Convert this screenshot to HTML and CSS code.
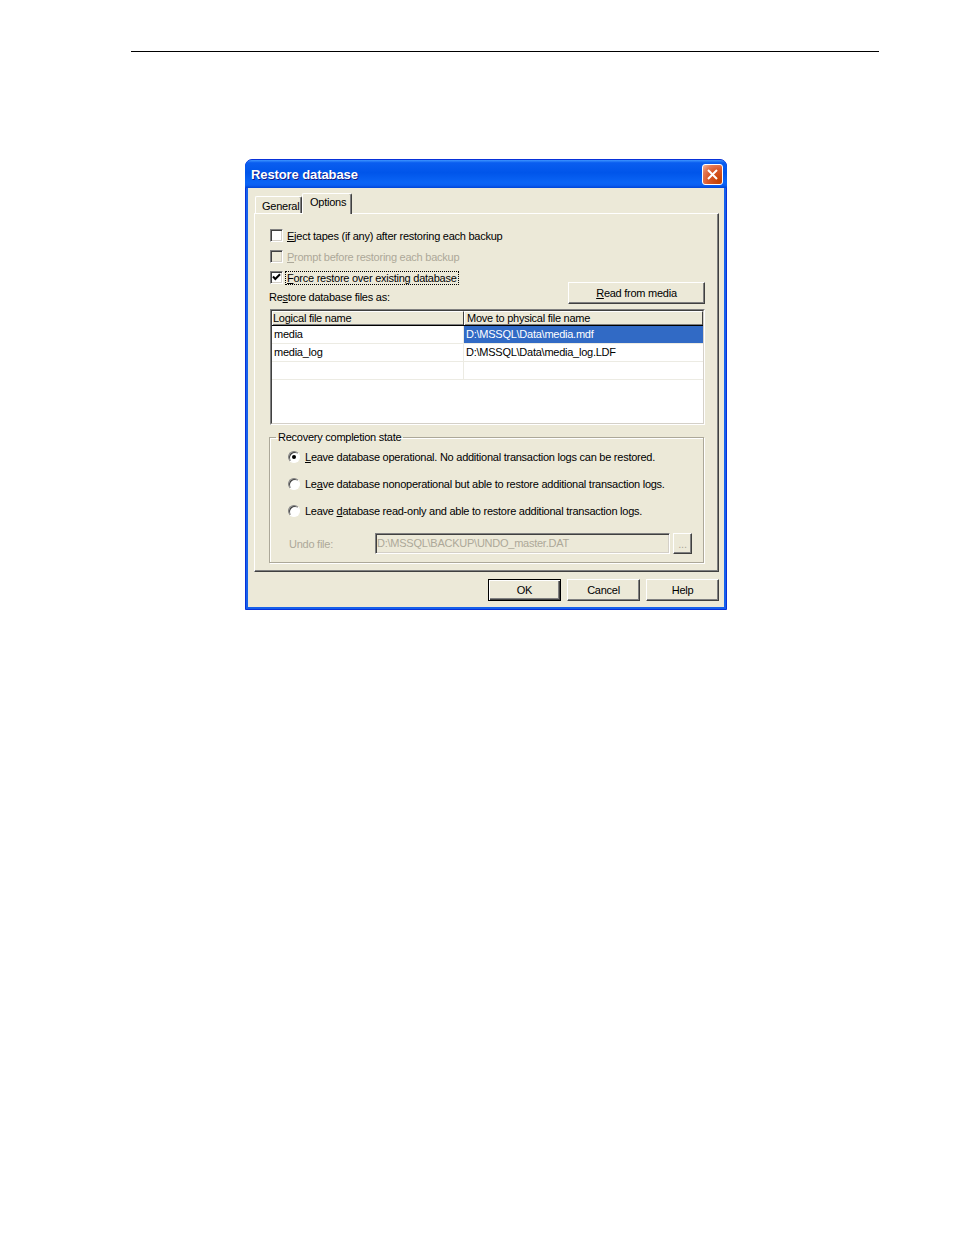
FILE: index.html
```html
<!doctype html>
<html>
<head>
  <link rel="stylesheet" href="styles.css">
</head>
<body>
  <div class="rule"></div>

  <div class="dialog">
    <div class="titlebar">
      <span class="title">Restore database</span>
      <span class="close">
        <svg width="19" height="19" viewBox="0 0 19 19"><path d="M5 5 L14 14 M14 5 L5 14" stroke="#fff" stroke-width="2" fill="none"/></svg>
      </span>
    </div>

    <div class="body">
      <div class="tabs">
        <div class="tab">General</div>
        <div class="tab selected">Options</div>
      </div>

      <div class="panel">
        <div class="checks">
          <div class="check"><span class="box"></span><span><u>E</u>ject tapes (if any) after restoring each backup</span></div>
          <div class="check disabled"><span class="box"></span><span><u>P</u>rompt before restoring each backup</span></div>
          <div class="check"><span class="box"><svg width="11" height="11" viewBox="0 0 11 11"><path d="M2 4.5 L4.3 7 L9 2.2" stroke="#000" stroke-width="2" fill="none"/></svg></span><span class="focus"><u>F</u>orce restore over existing database</span></div>
        </div>

        <div class="files-row">
          <span class="files-label">Re<u>s</u>tore database files as:</span>
          <button class="btn read-btn"><u>R</u>ead from media</button>
        </div>

        <div class="list">
          <div class="list-inner">
            <div class="row head">
              <div class="cell c1">Logical file name</div>
              <div class="cell c2">Move to physical file name</div>
            </div>
            <div class="row">
              <div class="cell c1">media</div>
              <div class="cell c2 sel">D:\MSSQL\Data\media.mdf</div>
            </div>
            <div class="row">
              <div class="cell c1">media_log</div>
              <div class="cell c2">D:\MSSQL\Data\media_log.LDF</div>
            </div>
            <div class="row">
              <div class="cell c1"></div>
              <div class="cell c2"></div>
            </div>
          </div>
        </div>

        <fieldset class="group">
          <legend>Recovery completion state</legend>
          <div class="radios">
            <div class="radio"><span class="dot on"></span><span><u>L</u>eave database operational. No additional transaction logs can be restored.</span></div>
            <div class="radio"><span class="dot"></span><span>Le<u>a</u>ve database nonoperational but able to restore additional transaction logs.</span></div>
            <div class="radio"><span class="dot"></span><span>Leave <u>d</u>atabase read-only and able to restore additional transaction logs.</span></div>
          </div>
          <div class="undo-row">
            <span class="undo-label">Undo file:</span>
            <span class="undo-input">D:\MSSQL\BACKUP\UNDO_master.DAT</span>
            <button class="btn browse">...</button>
          </div>
        </fieldset>
      </div>

      <div class="buttons">
        <button class="btn default">OK</button>
        <button class="btn">Cancel</button>
        <button class="btn">Help</button>
      </div>
    </div>
  </div>
</body>
</html>
```

FILE: styles.css
```css
body{
  margin: 0;
  background: #fff;
  font-family: "Liberation Sans", Arial, sans-serif;
  font-size: 11px;
  letter-spacing: -0.25px;
  color: #000;
}
.rule{
  height: 1px;
  background: #000;
  margin: 51px 75px 0 131px;
}

.dialog{
  margin: 107px 0 0 245px;
  width: 482px;
  height: 451px;
  box-sizing: border-box;
  display: flex;
  flex-direction: column;
  background: #1660ea;
  border: 1px solid #0831d9;
  border-radius: 7px 7px 0 0;
}
.titlebar{
  height: 28px;
  margin: 0 -1px;
  display: flex;
  align-items: center;
  justify-content: space-between;
  border-radius: 7px 7px 0 0;
  background: linear-gradient(to bottom, #3d95ff 0%, #0a5ef0 10%, #0055ea 45%, #0a64f5 80%, #0a5ff2 90%, #0044d6 100%);
}
.title{
  padding-left: 6px;
  color: #fff;
  font-size: 13px;
  font-weight: bold;
  letter-spacing: -0.1px;
  text-shadow: 1px 1px #0f1a89;
}
.close{
  width: 19px;
  height: 19px;
  margin-right: 4px;
  border: 1px solid #fff;
  border-radius: 3px;
  background: radial-gradient(circle at 85% 85%, #c44100 0%, #d9582a 50%, #e47a55 75%, #f5b9a0 100%);
  display: flex;
}

.body{
  flex: 1;
  margin: 0 2px 2px;
  background: #ece9d8;
  padding: 5px 5px 0 6px;
  display: flex;
  flex-direction: column;
}

.tabs{
  height: 20px;
  display: flex;
  align-items: flex-end;
  padding-left: 1px;
  position: relative;
  z-index: 1;
}
.tab{
  height: 17px;
  width: 47px;
  box-sizing: border-box;
  padding: 3px 0 0 6px;
  white-space: nowrap;
  border: 1px solid #fff;
  border-right-color: #404040;
  border-bottom: none;
  border-radius: 2px 2px 0 0;
  box-shadow: inset -1px 0 #808080;
  background: #ece9d8;
}
.tab.selected{
  height: 21px;
  width: 50px;
  margin-bottom: -1px;
  padding: 2px 0 0 7px;
}

.panel{
  height: 359px;
  box-sizing: border-box;
  border: 1px solid #fff;
  border-right-color: #404040;
  border-bottom-color: #404040;
  box-shadow: inset -1px -1px #808080;
  padding: 15px 13px 0 15px;
  display: flex;
  flex-direction: column;
}

.checks{
  display: flex;
  flex-direction: column;
  gap: 8px;
}
.check{
  height: 13px;
  display: flex;
  align-items: center;
  gap: 4px;
}
.box{
  width: 13px;
  height: 13px;
  box-sizing: border-box;
  border: 1px solid;
  border-color: #808080 #fff #fff #808080;
  box-shadow: inset 1px 1px #404040, inset -1px -1px #d4d0c8;
  background: #fff;
  display: flex;
  align-items: center;
  justify-content: center;
}
.check.disabled{
  color: #aca899;
}
.check.disabled .box{
  background: #ece9d8;
}
.focus{
  outline: 1px dotted #000;
  padding: 0 1px;
  margin-left: -1px;
}

.files-row{
  margin-top: -2px;
  height: 22px;
  display: flex;
  justify-content: space-between;
  align-items: flex-end;
}
.files-label{
  padding-bottom: 1px;
  margin-left: -1px;
}

.btn{
  height: 22px;
  box-sizing: border-box;
  padding: 0;
  font-family: "Liberation Sans", Arial, sans-serif;
  font-size: 11px;
  letter-spacing: -0.25px;
  color: #000;
  background: #ece9d8;
  border: 1px solid;
  border-color: #fff #404040 #404040 #fff;
  box-shadow: inset -1px -1px #808080;
}
.read-btn{
  width: 137px;
}

.list{
  margin-top: 5px;
  height: 116px;
  box-sizing: border-box;
  border: 1px solid;
  border-color: #808080 #fff #fff #808080;
}
.list-inner{
  height: 100%;
  box-sizing: border-box;
  border: 1px solid;
  border-color: #404040 #d4d0c8 #d4d0c8 #404040;
  background: #fff;
}
.row{
  display: flex;
  height: 18px;
  box-sizing: border-box;
  border-bottom: 1px solid #ecebe3;
}
.cell{
  box-sizing: border-box;
  line-height: 17px;
  padding-left: 2px;
  white-space: nowrap;
}
.c1{
  width: 192px;
  border-right: 1px solid #ecebe3;
}
.c2{
  width: 239px;
  padding-left: 2px;
}
.sel{
  background: #316ac5;
  color: #fff;
}
.row.head{
  height: 15px;
  border-bottom: 1px solid #000;
}
.head .cell{
  line-height: 12px;
  background: #ece9d8;
  border-top: 1px solid #fff;
  border-left: 1px solid #fff;
  border-right: 1px solid #404040;
  box-shadow: inset 0 -1px #808080;
  padding-left: 0;
}
.head .c2{
  padding-left: 2px;
}

.group{
  margin: 6px 1px 0 -1px;
  padding: 6px 11px 8px 18px;
  border: 1px solid #aca899;
  box-shadow: inset 1px 1px #fff, 1px 1px #fff;
}
.group legend{
  padding: 0 2px;
  margin-left: -12px;
  line-height: 13px;
}
.radios{
  display: flex;
  flex-direction: column;
  gap: 14px;
}
.radio{
  height: 13px;
  display: flex;
  align-items: center;
  gap: 5px;
}
.dot{
  width: 12px;
  height: 12px;
  box-sizing: border-box;
  border-radius: 50%;
  border: 1px solid;
  border-color: #808080 #fff #fff #808080;
  box-shadow: inset 1px 1px #404040;
  background: #fff;
  display: flex;
  align-items: center;
  justify-content: center;
}
.dot.on::after{
  content: "";
  width: 4px;
  height: 4px;
  border-radius: 50%;
  background: #000;
}

.undo-row{
  margin-top: 16px;
  height: 21px;
  display: flex;
  align-items: center;
  color: #aca899;
}
.undo-label{
  width: 86px;
  padding-left: 1px;
}
.undo-input{
  width: 295px;
  height: 21px;
  box-sizing: border-box;
  line-height: 19px;
  padding-left: 1px;
  border: 1px solid;
  border-color: #808080 #fff #fff #808080;
  box-shadow: inset 1px 1px #404040, inset -1px -1px #d4d0c8;
}
.browse{
  width: 19px;
  height: 21px;
  margin-left: 3px;
  color: #aca899;
}

.buttons{
  margin-top: 7px;
  display: flex;
  justify-content: flex-end;
  gap: 6px;
}
.buttons .btn{
  width: 73px;
}
.btn.default{
  border: 1px solid #000;
  box-shadow: inset 1px 1px #fff, inset -1px -1px #404040, inset -2px -2px #808080;
}
```
